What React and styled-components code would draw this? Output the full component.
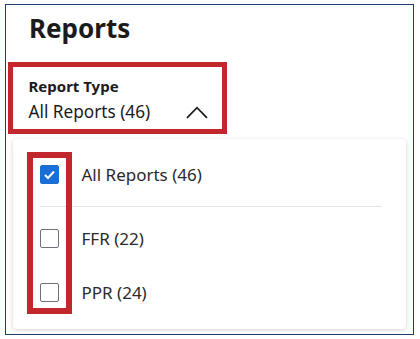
import React from "react";
import styled, { createGlobalStyle } from "styled-components";

const ReportData = [
  { label: "All Reports (46)", checked: true },
  { label: "FFR (22)", checked: false },
  { label: "PPR (24)", checked: false },
];

const GlobalStyle = createGlobalStyle`
  body {
    margin: 0;
    background: #ffffff;
    font-family: "Noto Sans", "Open Sans", sans-serif;
    color: #1b1b1b;
  }
`;

const ChevronUp = () => (
  <svg width="22" height="13" viewBox="0 0 22 13" fill="none">
    <path d="M1 11.8 L11 1.6 L21 11.8" stroke="#1b1b1b" strokeWidth="1.7" />
  </svg>
);

const Check = () => (
  <svg width="13" height="11" viewBox="0 0 13 11" fill="none">
    <path d="M2 6 L5 9 L11 2.5" stroke="#ffffff" strokeWidth="2" />
  </svg>
);

const App = () => {
  return (
    <>
      <GlobalStyle />
      <Frame>
        <Heading>Reports</Heading>
        <Trigger>
          <Label>Report Type</Label>
          <ValueRow>
            <Value>All Reports (46)</Value>
            <ChevronUp />
          </ValueRow>
        </Trigger>
        <Panel>
          {ReportData.map((item, index) => {
            return (
              <React.Fragment key={index}>
                <Option>
                  <Box checked={item.checked}>{item.checked && <Check />}</Box>
                  <OptionText>{item.label}</OptionText>
                </Option>
                {index === 0 && <Divider />}
              </React.Fragment>
            );
          })}
          <Highlight />
        </Panel>
      </Frame>
    </>
  );
};

export default App;

const Frame = styled.div`
  box-sizing: border-box;
  margin: 4px 0 0 5px;
  width: 409px;
  height: 331px;
  border: 1.5px solid #1d3d6b;
  display: flex;
  flex-direction: column;
`;

const Heading = styled.h1`
  margin: 6px 0 0 23px;
  font-size: 26px;
  font-weight: 700;
  line-height: 34px;
  color: #1b1b1b;
`;

const Trigger = styled.div`
  box-sizing: border-box;
  margin: 17px 0 0 1.5px;
  width: 219px;
  height: 72px;
  border: 5px solid #c1272d;
  padding: 9px 0 0 16px;
  display: flex;
  flex-direction: column;
`;

const Label = styled.div`
  font-size: 15px;
  font-weight: 700;
  line-height: 20px;
`;

const ValueRow = styled.div`
  display: flex;
  align-items: center;
  justify-content: space-between;
  padding: 4px 14px 0 0;
`;

const Value = styled.div`
  font-size: 17.2px;
  line-height: 24px;
`;

const Panel = styled.div`
  position: relative;
  box-sizing: border-box;
  margin: 5px 0 0 6.5px;
  width: 393px;
  height: 190px;
  border-radius: 4px;
  background: #ffffff;
  box-shadow: 0 1px 4px rgba(0, 0, 0, 0.18);
  padding: 8px 0 10px 27px;
  display: flex;
  flex-direction: column;
`;

const Option = styled.div`
  display: flex;
  align-items: center;
  gap: 23px;
  height: 54px;
`;

const Box = styled.div`
  box-sizing: border-box;
  width: 19px;
  height: 19px;
  border-radius: 2px;
  display: flex;
  align-items: center;
  justify-content: center;
  background: ${(p) => (p.checked ? "#1a6fd6" : "#ffffff")};
  border: 1.5px solid ${(p) => (p.checked ? "#1a6fd6" : "#6f727a")};
`;

const OptionText = styled.span`
  font-size: 17px;
  color: #2a2a2a;
`;

const Divider = styled.div`
  height: 1px;
  margin: 5px 24px 4px 0;
  background: #e3e3e3;
`;

const Highlight = styled.div`
  position: absolute;
  left: 14px;
  top: 13px;
  width: 45px;
  height: 162px;
  box-sizing: border-box;
  border: 6px solid #c1272d;
  pointer-events: none;
`;
